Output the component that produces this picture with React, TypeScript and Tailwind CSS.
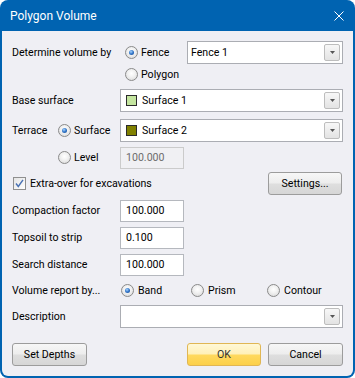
import React from "react";

const FONT = { fontFamily: "Roboto, 'Liberation Sans', sans-serif" };

function Radio({ checked }: { checked?: boolean }) {
  return (
    <span className="inline-flex w-[13px] h-[13px] shrink-0 rounded-full border border-[#8a8a8a] bg-[radial-gradient(circle_at_50%_40%,#ffffff_0%,#f2f2f2_40%,#d6d6d6_100%)] items-center justify-center">
      {checked && (
        <span className="w-[5px] h-[5px] rounded-full bg-[radial-gradient(circle_at_40%_35%,#a8d6ff_0%,#3174c8_50%,#1b4a8c_100%)]" />
      )}
    </span>
  );
}

function Check() {
  return (
    <span className="inline-flex w-[13px] h-[13px] shrink-0 border border-[#8f8f8f] bg-[linear-gradient(to_bottom_right,#e4e4e4,#ffffff)] items-center justify-center">
      <svg width="11" height="11" viewBox="0 0 11 11">
        <path d="M2 5.5 L4.3 8.5 L9 1.8" fill="none" stroke="#4a72b4" strokeWidth="1.4" />
      </svg>
    </span>
  );
}

function DropBtn() {
  return (
    <span className="ml-auto mr-[2px] w-[16px] h-[17px] shrink-0 rounded-[2px] border border-[#bdbdbd] bg-[linear-gradient(to_bottom,#f7f7f7,#e3e3e3)] flex items-center justify-center">
      <svg width="5" height="3" viewBox="0 0 5 3">
        <path d="M0 0 H5 L2.5 3 Z" fill="#555" />
      </svg>
    </span>
  );
}

function Combo({ children, className }: { children?: React.ReactNode; className?: string }) {
  return (
    <div className={"h-[23px] border border-[#abadb3] bg-white flex items-center " + (className || "")}>
      {children}
      <DropBtn />
    </div>
  );
}

function Swatch({ color }: { color: string }) {
  return <span className="w-[11px] h-[11px] border border-[#2b2b2b] ml-[5px] mr-[5px] shrink-0" style={{ backgroundColor: color }} />;
}

function TextBox({ value, disabled }: { value: string; disabled?: boolean }) {
  return (
    <div
      className={
        "w-[64px] h-[22px] border flex items-center pl-[5px] " +
        (disabled ? "border-[#cbcbcb] bg-[#f0f0f3] text-[#6d6d6d]" : "border-[#b5b8be] bg-white text-black")
      }
    >
      {value}
    </div>
  );
}

function Btn({ children, ok, className }: { children: React.ReactNode; ok?: boolean; className?: string }) {
  return (
    <div
      className={
        "h-[23px] rounded-[3px] border flex items-center justify-center " +
        (ok
          ? "border-[#e0b654] bg-[linear-gradient(to_bottom,#fff8d6_0%,#fff0b8_48%,#ffd95e_52%,#fcd04a_100%)] text-[#333]"
          : "border-[#9c9c9c] bg-[linear-gradient(to_bottom,#f7f7f7_0%,#ededed_48%,#dedede_52%,#d6d6d6_100%)] text-black") +
        " " +
        (className || "")
      }
    >
      {children}
    </div>
  );
}

export default function App() {
  return (
    <div className="w-[355px] h-[378px] bg-white text-[10.6px] text-black" style={FONT}>
      <div className="w-full h-full rounded-[8px] bg-[#0063b1] flex flex-col overflow-hidden">
        <div className="h-[31px] shrink-0 flex items-center pl-[10px] pr-[11px]">
          <span className="text-white text-[12px] leading-none">Polygon Volume</span>
          <svg className="ml-auto" width="10" height="10" viewBox="0 0 10 10">
            <path d="M0.5 0.5 L9.5 9.5 M9.5 0.5 L0.5 9.5" stroke="#ffffff" strokeWidth="1" />
          </svg>
        </div>
        <div className="flex-1 mx-[2px] mb-[2px] bg-[#efeff4] rounded-b-[6px] flex flex-col px-[10px]">
          {/* Row A */}
          <div className="mt-[10px] h-[23px] flex items-center">
            <span className="w-[108px]">Determine volume by</span>
            <span className="ml-[5px] flex items-center gap-[3px]">
              <Radio checked />
              <span>Fence</span>
            </span>
            <Combo className="ml-auto w-[156px]">
              <span className="pl-[3px]">Fence 1</span>
            </Combo>
          </div>
          {/* Row B */}
          <div className="h-[21px] flex items-center pl-[113px] gap-[3px]">
            <Radio />
            <span>Polygon</span>
          </div>
          {/* Row C */}
          <div className="mt-[4px] h-[23px] flex items-center">
            <span className="w-[108px]">Base surface</span>
            <Combo className="flex-1">
              <Swatch color="#c4e59f" />
              <span>Surface 1</span>
            </Combo>
          </div>
          {/* Row D */}
          <div className="mt-[7px] h-[23px] flex items-center">
            <span className="w-[46px]">Terrace</span>
            <span className="flex items-center gap-[3px]">
              <Radio checked />
              <span>Surface</span>
            </span>
            <Combo className="ml-auto w-[223px]">
              <Swatch color="#808000" />
              <span>Surface 2</span>
            </Combo>
          </div>
          {/* Row E */}
          <div className="mt-[5px] h-[22px] flex items-center">
            <span className="w-[46px]" />
            <span className="w-[62px] flex items-center gap-[3px]">
              <Radio />
              <span>Level</span>
            </span>
            <TextBox value="100.000" disabled />
          </div>
          {/* Row F */}
          <div className="mt-[3px] h-[23px] flex items-center">
            <span className="ml-[1px] flex items-center gap-[4px]">
              <Check />
              <span>Extra-over for excavations</span>
            </span>
            <Btn className="ml-auto w-[74px] mr-[1px]">Settings...</Btn>
          </div>
          {/* Row G */}
          <div className="mt-[5px] h-[22px] flex items-center">
            <span className="w-[108px]">Compaction factor</span>
            <TextBox value="100.000" />
          </div>
          {/* Row H */}
          <div className="mt-[5px] h-[22px] flex items-center">
            <span className="w-[108px]">Topsoil to strip</span>
            <TextBox value="0.100" />
          </div>
          {/* Row I */}
          <div className="mt-[4px] h-[23px] flex items-center">
            <span className="w-[108px]">Search distance</span>
            <TextBox value="100.000" />
          </div>
          {/* Row J */}
          <div className="mt-[5px] h-[20px] flex items-center">
            <span className="w-[109px]">Volume report by...</span>
            <span className="w-[70px] flex items-center gap-[4px]">
              <Radio checked />
              <span>Band</span>
            </span>
            <span className="w-[76px] flex items-center gap-[4px]">
              <Radio />
              <span>Prism</span>
            </span>
            <span className="flex items-center gap-[4px]">
              <Radio />
              <span>Contour</span>
            </span>
          </div>
          {/* Row K */}
          <div className="mt-[4px] h-[23px] flex items-center">
            <span className="w-[108px]">Description</span>
            <Combo className="flex-1" />
          </div>
          {/* Row L */}
          <div className="mt-[15px] h-[23px] flex items-center">
            <Btn className="w-[75px]">Set Depths</Btn>
            <div className="ml-auto flex items-center gap-[7px]">
              <Btn ok className="w-[74px]">OK</Btn>
              <Btn className="w-[75px]">Cancel</Btn>
            </div>
          </div>
        </div>
      </div>
    </div>
  );
}
